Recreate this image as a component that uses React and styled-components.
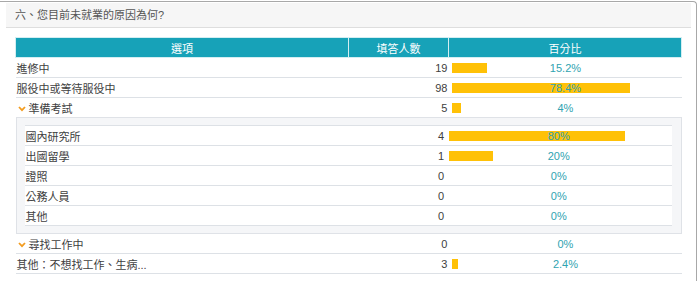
import styled, { createGlobalStyle } from "styled-components";

const GlobalStyle = createGlobalStyle`
  html, body {
    margin: 0;
    padding: 0;
    background: #fff;
  }
  body {
    font-family: "Liberation Sans", "Noto Sans CJK TC", sans-serif;
    font-size: 11px;
    color: #404040;
  }
`;

const Panel = styled.div`
  box-sizing: border-box;
  width: 697px;
  margin-top: 1px;
  padding: 1px 5px 7px 6px;
  border-top: 1px solid #a8a8a8;
  border-right: 1px solid #a8a8a8;
  border-radius: 0 4px 0 0;
`;

const Title = styled.div`
  height: 24px;
  line-height: 24px;
  padding-left: 9px;
  background: #f6f6f6;
  border-bottom: 1px solid #dedede;
  color: #555;
`;

const Body = styled.div`
  padding: 9px 9px 0 9px;
`;

const Table = styled.table`
  width: 100%;
  table-layout: fixed;
  border-collapse: collapse;
  background: #fff;
  border-top: ${(p) => (p.$nested ? "1px solid #dde1e6" : "none")};
`;

const Th = styled.th`
  height: 19px;
  padding: 0;
  background: #17a2b8;
  color: #fff;
  font-weight: normal;
  text-align: center;
  border: 1px solid #d3eef2;
`;

const Row = styled.tr`
  border-bottom: ${(p) => (p.$open ? "none" : "1px solid #dde1e6")};
`;

const Td = styled.td`
  height: 19px;
  padding: 0 0 0 1px;
  white-space: nowrap;
  overflow: hidden;
  vertical-align: middle;
`;

const NameCell = styled(Td)`
  padding-left: ${(p) => (p.$group ? "2px" : "1px")};
`;

const CountCell = styled(Td)`
  text-align: right;
  padding-right: 1px;
`;

const PercentCell = styled(Td)`
  position: relative;
  text-align: center;
  color: #2fa3b1;
`;

const Bar = styled.span`
  position: absolute;
  left: 4px;
  top: 50%;
  height: 10px;
  margin-top: -5px;
  background: #ffc107;
`;

const PercentText = styled.span`
  position: relative;
`;

const Chevron = styled.svg`
  width: 8px;
  height: 6px;
  margin: 0 3px 1px 0;
  vertical-align: middle;
`;

const GroupCell = styled.td`
  padding: 0;
`;

const Nested = styled.div`
  background: #f5f6f8;
  border: 1px solid #dfe2e7;
  padding: 7px 9px 7px 8px;
`;

function ChevronDown() {
  return (
    <Chevron viewBox="0 0 8 6">
      <polyline
        points="1,1 4,4.2 7,1"
        fill="none"
        stroke="#f39c1f"
        strokeWidth="1.8"
      />
    </Chevron>
  );
}

function DataRow({ item, open }) {
  return (
    <Row $open={open}>
      <NameCell $group={item.group}>
        {item.group && <ChevronDown />}
        {item.name}
      </NameCell>
      <CountCell>{item.count}</CountCell>
      <PercentCell>
        {item.pct > 0 && (
          <Bar style={{ width: `calc((100% - 6px) * ${item.pct / 100})` }} />
        )}
        <PercentText>{item.pct}%</PercentText>
      </PercentCell>
    </Row>
  );
}

function Columns() {
  return (
    <colgroup>
      <col style={{ width: "50%" }} />
      <col style={{ width: "15%" }} />
      <col style={{ width: "35%" }} />
    </colgroup>
  );
}

function ResultTable({ rows, head, nested }) {
  return (
    <Table $nested={nested}>
      <Columns />
      {head && (
        <thead>
          <tr>
            <Th>選項</Th>
            <Th>填答人數</Th>
            <Th>百分比</Th>
          </tr>
        </thead>
      )}
      <tbody>
        {rows.map((item) =>
          item.children ? (
            [
              <DataRow key={item.name} item={item} open />,
              <tr key={item.name + "-sub"}>
                <GroupCell colSpan={3}>
                  <Nested>
                    <ResultTable rows={item.children} nested />
                  </Nested>
                </GroupCell>
              </tr>,
            ]
          ) : (
            <DataRow key={item.name} item={item} />
          )
        )}
      </tbody>
    </Table>
  );
}

const data = [
  { name: "進修中", count: 19, pct: 15.2 },
  { name: "服役中或等待服役中", count: 98, pct: 78.4 },
  {
    name: "準備考試",
    count: 5,
    pct: 4,
    group: true,
    children: [
      { name: "國內研究所", count: 4, pct: 80 },
      { name: "出國留學", count: 1, pct: 20 },
      { name: "證照", count: 0, pct: 0 },
      { name: "公務人員", count: 0, pct: 0 },
      { name: "其他", count: 0, pct: 0 },
    ],
  },
  { name: "尋找工作中", count: 0, pct: 0, group: true },
  { name: "其他：不想找工作、生病...", count: 3, pct: 2.4 },
];

export default function App() {
  return (
    <>
      <GlobalStyle />
      <Panel>
        <Title>六、您目前未就業的原因為何?</Title>
        <Body>
          <ResultTable rows={data} head />
        </Body>
      </Panel>
    </>
  );
}
